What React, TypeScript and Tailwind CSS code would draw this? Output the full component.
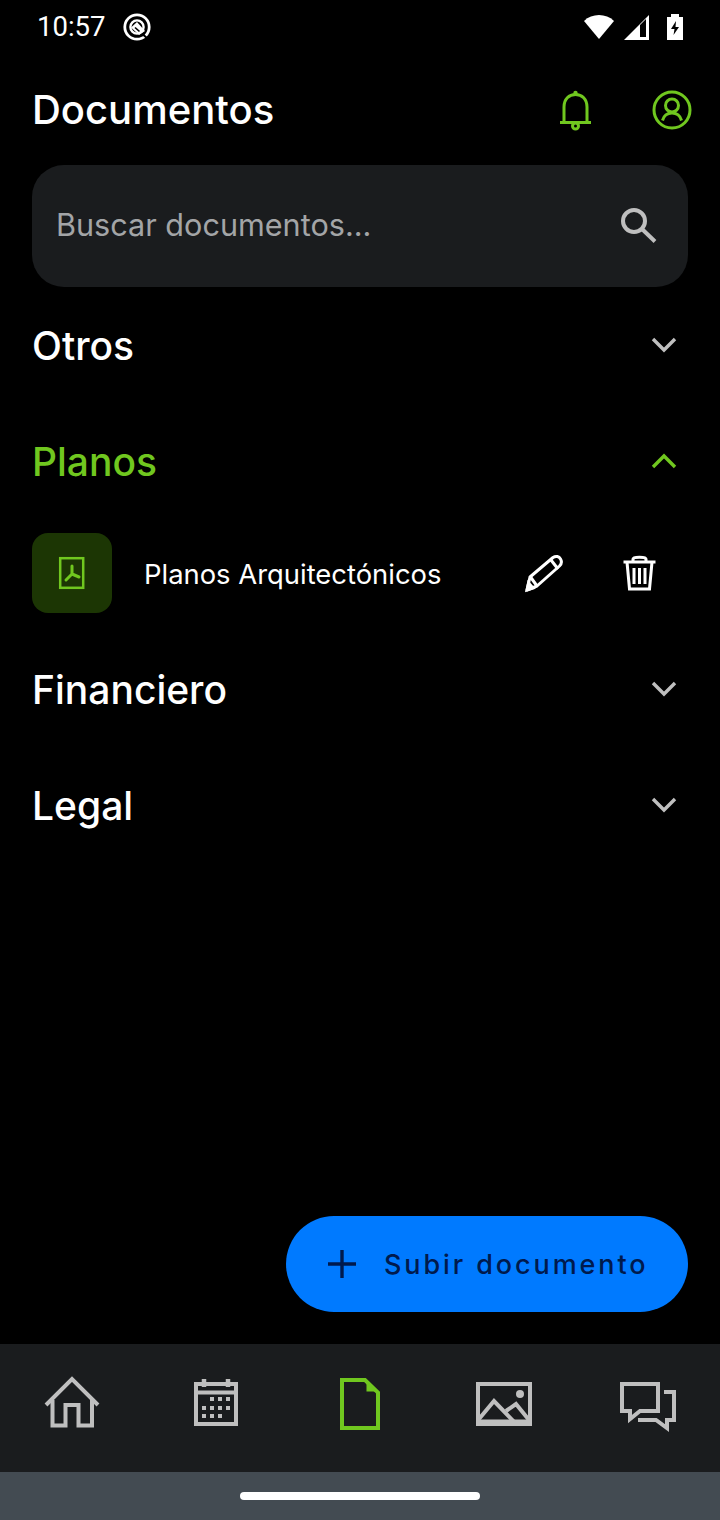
const GREEN = "#70c71f";
const GREY = "#bfbfbf";

function Chevron({ up }: { up?: boolean }) {
  return (
    <svg width="28" height="16" viewBox="0 0 28 16" fill="none" stroke={up ? GREEN : GREY} strokeWidth="3.4">
      <path d={up ? "M3 14 L14 3 L25 14" : "M3 2 L14 13 L25 2"} />
    </svg>
  );
}

function Section({ title, up }: { title: string; up?: boolean }) {
  return (
    <div className="h-[116px] pl-[32px] pr-[42px] flex items-center justify-between">
      <span className={`text-[39px] leading-[48px] mt-[1px] font-medium ${up ? "text-[#70c71f]" : "text-white"}`}>{title}</span>
      <Chevron up={up} />
    </div>
  );
}

function StatusBar() {
  return (
    <div className="h-[54px] pl-[37px] pr-[36px] flex items-center justify-between text-white">
      <div className="flex items-center gap-[17px]">
        <span className="text-[27.5px] leading-none" style={{ fontFamily: "Roboto, sans-serif" }}>10:57</span>
        <svg width="30" height="30" viewBox="124 12 30 30" fill="none" stroke="white">
          <circle cx="139" cy="27" r="12.2" strokeWidth="2.8" />
          <circle cx="139" cy="27" r="6.6" strokeWidth="2.4" />
          <path d="M133 27.5 L139 22 L147 31 L141 35Z" fill="white" stroke="none" />
          <path d="M137 27.5 L141.5 31.5" stroke="black" strokeWidth="1.6" />
          <path d="M144.5 34 L152 41" stroke="black" strokeWidth="2" />
        </svg>
      </div>
      <div className="flex items-center">
        <svg width="32" height="28" viewBox="585 12 32 28" className="mr-[8px]">
          <path d="M586 20 A22 22 0 0 1 616 20 L601 38Z" fill="white" />
        </svg>
        <svg width="27" height="28" viewBox="624 12 27 28" className="mr-[17px]">
          <path d="M625 39 L650 14 V39Z" fill="white" />
          <path d="M641 24 L647 18 V36 H641Z" fill="black" />
        </svg>
        <svg width="17" height="28" viewBox="668 12 17 28">
          <path d="M668 16 H672 V13 H680 V16 H684 V39 H668Z" fill="white" />
          <path d="M677 20 L672 28 H675.5 L674.5 34 L680 26 H676.5Z" fill="black" />
        </svg>
      </div>
    </div>
  );
}

function Header() {
  return (
    <div className="h-[111px] pl-[32px] flex items-center justify-between">
      <h1 className="text-[40px] leading-[48px] font-medium text-white">Documentos</h1>
      <div className="flex items-center mr-[27px] gap-[58px]">
        <svg width="34" height="42" viewBox="559 87 34 42" fill="none" stroke={GREEN} strokeWidth="3">
          <path d="M564 120 V105 C564 97 569 92.5 575.5 92.5 C582 92.5 587 97 587 105 V120" />
          <path d="M560 120.5 H591" />
          <circle cx="575.5" cy="124" r="3" />
          <circle cx="575.5" cy="91" r="2.2" fill={GREEN} stroke="none" />
        </svg>
        <svg width="42" height="42" viewBox="651 87 42 42" fill="none" stroke={GREEN} strokeWidth="3">
          <circle cx="672" cy="108" r="18" />
          <circle cx="672" cy="103.5" r="6.5" />
          <path d="M662.5 118.5 C664 113 668 111 672 111 C676 111 680 113 681.5 118.5" />
        </svg>
      </div>
    </div>
  );
}

function Search() {
  return (
    <div className="mx-[32px] h-[122px] rounded-[32px] bg-[#1a1c1e] pl-[24px] pr-[30px] flex items-center justify-between">
      <span className="text-[30.6px] leading-[36px] -mt-[2px] text-[#a3a5a7]">Buscar documentos...</span>
      <svg width="38" height="38" viewBox="621 207 38 38" fill="none" stroke={GREY} strokeWidth="4" className="-mt-[1px]">
        <circle cx="635" cy="221" r="11" />
        <path d="M643 229 L656 241.5" />
      </svg>
    </div>
  );
}

function FileRow() {
  return (
    <div className="pl-[32px] pt-[14px] pb-[18px] flex items-center">
      <div className="w-[80px] h-[80px] rounded-[16px] bg-[#1c3604] flex items-center justify-center">
        <svg width="28" height="34" viewBox="58 556 28 34" fill="none" stroke={GREEN}>
          <rect x="60.2" y="558.2" width="23" height="29.6" strokeWidth="2.5" />
          <path d="M72 566 V574 M72 574 L66 580 M72 574 L79 577" strokeWidth="3" strokeLinecap="round" />
        </svg>
      </div>
      <span className="ml-[32px] w-[380px] text-[27.4px] leading-[34px] mt-[2px] text-white">Planos Arquitectónicos</span>
      <svg width="40" height="40" viewBox="524 552 40 40" fill="none" stroke="white" strokeWidth="3">
        <path d="M527 589 L530 576 L553 556.5 C556 554.5 559 555.5 560.5 558 C562 560.5 561.5 563 559.5 565 L537 585Z" strokeLinejoin="round" />
        <path d="M551 559 L558 568 M530.5 576 L537 585" />
        <path d="M527 589 L528.5 582 L533 587Z" fill="white" />
      </svg>
      <svg width="36" height="40" viewBox="622 552 36 40" fill="none" stroke="white" strokeWidth="3" className="ml-[58px]">
        <path d="M623.5 561 H655.5" />
        <path d="M633 560 V558 C633 555.5 646 555.5 646 558 V560" />
        <path d="M627 561 L629.5 588 H649.5 L652 561" />
        <path d="M634 567 V583 M639.5 567 V583 M645 567 V583" />
      </svg>
    </div>
  );
}

function Fab() {
  return (
    <button className="w-[402px] h-[96px] rounded-full bg-[#007aff] flex items-center pl-[42px]">
      <svg width="28" height="28" viewBox="0 0 28 28" stroke="#001a4d" strokeWidth="3.4">
        <path d="M14 0 V28 M0 14 H28" />
      </svg>
      <span className="ml-[28px] text-[27px] leading-[34px] mt-[2px] font-medium tracking-[2.9px] text-[#001a4d]">Subir documento</span>
    </button>
  );
}

function BottomNav() {
  return (
    <nav className="h-[128px] bg-[#1a1c1e] grid grid-cols-5 pt-[28px]">
      <div className="flex justify-center">
        <svg width="64" height="64" viewBox="40 1372 64 64" fill="none" stroke={GREY} strokeWidth="4">
          <path d="M46 1405 L72 1379 L98 1405" />
          <path d="M52.5 1400 V1425.5 H65.5 V1405 H78.5 V1425.5 H92 V1400" />
        </svg>
      </div>
      <div className="flex justify-center">
        <svg width="64" height="64" viewBox="184 1372 64 64" fill="none" stroke={GREY} strokeWidth="4">
          <rect x="196" y="1384" width="40" height="40" />
          <path d="M196 1392.5 H236" />
          <path d="M204 1379 V1387 M228 1379 V1387" strokeWidth="4.5" />
          <g fill={GREY} stroke="none">
            <rect x="210" y="1397" width="4" height="4" />
            <rect x="218" y="1397" width="4" height="4" />
            <rect x="226" y="1397" width="4" height="4" />
            <rect x="202" y="1406" width="4" height="4" />
            <rect x="210" y="1406" width="4" height="4" />
            <rect x="218" y="1406" width="4" height="4" />
            <rect x="226" y="1406" width="4" height="4" />
            <rect x="202" y="1414" width="4" height="4" />
            <rect x="210" y="1414" width="4" height="4" />
            <rect x="218" y="1414" width="4" height="4" />
          </g>
        </svg>
      </div>
      <div className="flex justify-center">
        <svg width="64" height="64" viewBox="328 1372 64 64" fill="none" stroke={GREEN} strokeWidth="4">
          <path d="M342 1380 H365 L378 1392.5 V1428 H342Z" />
          <path d="M368 1385 V1390 H373.5Z" fill="#1d3a08" strokeWidth="3" />
        </svg>
      </div>
      <div className="flex justify-center">
        <svg width="64" height="64" viewBox="472 1372 64 64" fill="none" stroke={GREY} strokeWidth="4">
          <rect x="478" y="1384" width="52" height="40" />
          <path d="M479 1419 L494 1401 L516 1424" />
          <path d="M506 1411 L516 1404 L529 1420" />
          <path d="M479 1421 H529" strokeWidth="3" />
          <circle cx="520" cy="1394" r="4" fill={GREY} stroke="none" />
        </svg>
      </div>
      <div className="flex justify-center">
        <svg width="64" height="64" viewBox="616 1372 64 64" fill="none" stroke={GREY} strokeWidth="4">
          <path d="M622 1384 H658 V1411 H640 L630 1419 V1411 H622Z" />
          <path d="M664 1392 H674 V1420 H667 V1428 L656 1420 H638" />
        </svg>
      </div>
    </nav>
  );
}

export default function App() {
  return (
    <div className="w-[720px] h-[1520px] bg-black flex flex-col overflow-hidden" style={{ fontFamily: "Inter, sans-serif" }}>
      <StatusBar />
      <Header />
      <Search />
      <Section title="Otros" />
      <Section title="Planos" up />
      <FileRow />
      <Section title="Financiero" />
      <Section title="Legal" />
      <div className="flex-1 flex items-end justify-end pr-[32px] pb-[32px]">
        <Fab />
      </div>
      <BottomNav />
      <div className="h-[48px] bg-[#434b52] flex items-center justify-center">
        <div className="w-[240px] h-[8px] rounded-full bg-white" />
      </div>
    </div>
  );
}
